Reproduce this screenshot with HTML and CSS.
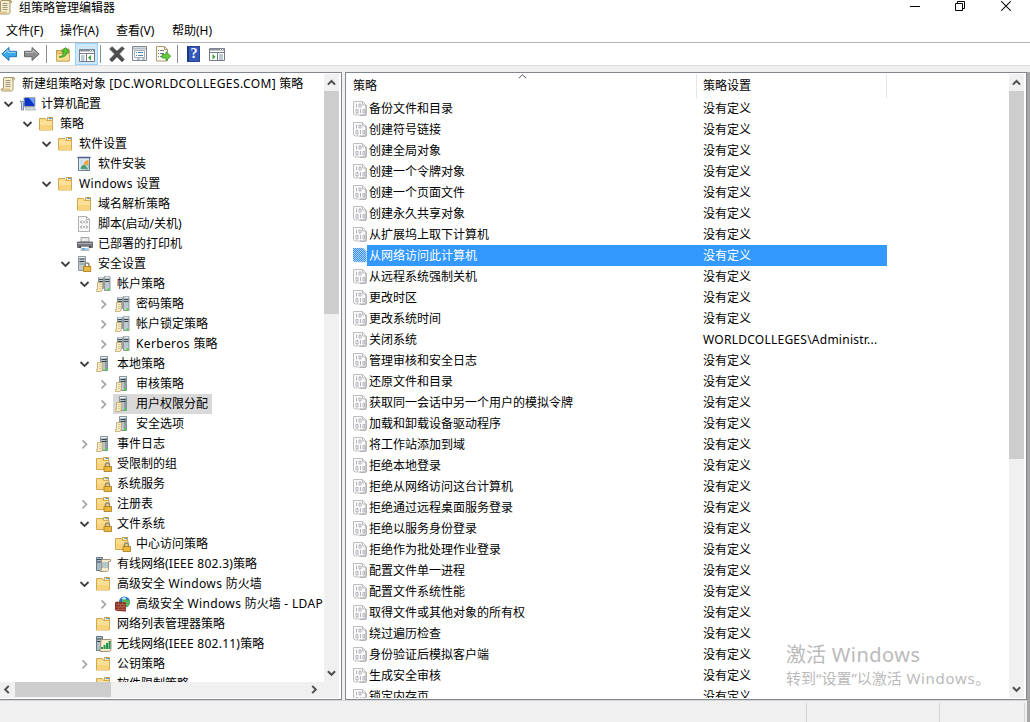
FILE: index.html
```html
<!DOCTYPE html>
<html lang="zh-CN">
<head>
<meta charset="utf-8">
<title>组策略管理编辑器</title>
<link rel="stylesheet" href="styles.css">
</head>
<body>
<svg class="defs" width="0" height="0">
  <symbol id="down" viewBox="0 0 17 20"><path d="M4.5 8l4 4 4-4" fill="none" stroke="#404040" stroke-width="1.8"/></symbol>
  <symbol id="right" viewBox="0 0 17 20"><path d="M6.5 6.3l4 4-4 4" fill="none" stroke="#a6a6a6" stroke-width="1.7"/></symbol>
  <symbol id="scroll" viewBox="0 0 16 16">
    <path d="M4 1.5h9.5c1 0 1.5 1 1 2l-1.5 1V13c0 1.500-1 2-2 2H2.500C1 15 .8 13 2 12.500h1.500V3z" fill="#f7efcf" stroke="#a8966a"/>
    <path d="M2 12.500h8v2.300H2z" fill="#d9c48c"/><path d="M12.500 4.500V2.500h2" fill="none" stroke="#b7a06a"/>
    <path d="M5.500 4.500h5M5.500 6.500h5M5.500 8.500h5M5.500 10.500h5" stroke="#9a957f"/>
  </symbol>
  <symbol id="computer" viewBox="0 0 16 16">
    <path d="M4 1.500h11v9H4z" fill="#0b35c4" stroke="#a9adb3"/><path d="M9 2h5.500v7z" fill="#6d9cf5"/>
    <path d="M5 11h9l1.500 3H6z" fill="#d9dde2" stroke="#8b929b" stroke-width=".6"/>
    <path d="M.5 4.500c0 2 1 2.500 1 2.500v7h2V7s1.300-.8 1-2.500L3.500 5.500h-2z" fill="#c4d6e8" stroke="#5c7a9b" stroke-width=".8"/>
  </symbol>
  <symbol id="folder" viewBox="0 0 16 16">
    <path d="M8.500 3.500V1.500h5v4h-5z" fill="#fbefc5" stroke="#c79f49"/><path d="M10 2.500h3" stroke="#4a9be0"/>
    <path d="M.5 2.500h6l1 2h6v9.500H.5z" fill="#fbdc8a" stroke="#d3a74c"/>
    <path d="M1 5h12v8.500H1z" fill="#fbe09a"/><path d="M1 9h12v4.500H1z" fill="#f8d37b"/>
  </symbol>
  <symbol id="lock" viewBox="0 0 16 16">
    <path d="M9.500 11V9.200c0-2.800 4-2.800 4 0V11" fill="none" stroke="#8f8a78" stroke-width="1.500"/>
    <path d="M8 10.500h7.500v5H8z" fill="#e3ad2d" stroke="#a87714" stroke-width=".8"/><path d="M8.500 12h6.500M8.500 14h6.500" stroke="#f5cf66" stroke-width=".7"/>
  </symbol>
  <symbol id="folderlock" viewBox="0 0 16 16">
    <path d="M7.500 3V1.500h5v4h-5z" fill="#fbefc5" stroke="#c79f49"/><path d="M9.500 2.500h2.500" stroke="#4a9be0"/>
    <path d="M.5 2.500h6l1 2h5.500v9H.5z" fill="#fbdc8a" stroke="#d3a74c"/><path d="M1 8h12v5H1z" fill="#f8d37b"/>
    <use href="#lock"/>
  </symbol>
  <symbol id="install" viewBox="0 0 16 16">
    <path d="M1.500 1.500h11v13h-11z" fill="#dfe7ef" stroke="#6b7d92"/><path d="M.5 1.500h13" stroke="#4c5a90" stroke-width="1.500"/>
    <path d="M6.500 9a5 5 0 015-5v5z" fill="#f2a33c"/><path d="M3 4h3.500v5H3z" fill="#c9dff0"/><path d="M3.500 13c.5-4 3-4.500 5-3.500l3 4z" fill="#4c9b72"/><path d="M9 9l3-1v5z" fill="#a8c7b6"/>
  </symbol>
  <symbol id="script" viewBox="0 0 16 16">
    <path d="M1.500.5h8l3 3v12h-11z" fill="#f8f8f8" stroke="#b0b0b0"/><path d="M9.500.5v3h3" fill="none" stroke="#b0b0b0"/>
    <path d="M5 4.500L3.500 6 5 7.500M9 4.500L10.500 6 9 7.500M6 6h2M5 9.500L3.500 11 5 12.500M9 9.500l1.500 1.500L9 12.500M6 11h2" fill="none" stroke="#7c7c86"/>
  </symbol>
  <symbol id="printer" viewBox="0 0 16 16">
    <path d="M4 1.500h8V6H4z" fill="#e9eaec" stroke="#8a8d92" stroke-width=".8"/><path d="M.5 6h15v5.500H.5z" fill="#75787e" stroke="#55585d" stroke-width=".8"/>
    <path d="M1 7.500h14" stroke="#aeb1b6"/><path d="M2.500 10h11v2h-11z" fill="#2e3034"/><path d="M4 10.500h8v4H4z" fill="#fff" stroke="#999" stroke-width=".7"/><path d="M5 12h3v2H5z" fill="#67aee2"/><path d="M8 12h3v2H8z" fill="#a7cfe9"/>
  </symbol>
  <symbol id="serverlock" viewBox="0 0 16 16">
    <path d="M1.500.5h7v14h-7z" fill="#c0cad1" stroke="#8a979f"/><path d="M2.500 3h5M2.500 5.500h5" stroke="#34414a"/><path d="M2.500 8h5" stroke="#84919a"/><path d="M2 1.500h6" stroke="#edf2f5"/>
    <g transform="translate(-1.500 0)"><use href="#lock"/></g>
  </symbol>
  <symbol id="doc" viewBox="0 0 16 16">
    <path d="M1.500 6.500h5v1.500l-.4 6c0 .9-.6 1.400-1.500 1.400H.6c-.8 0-.8-1.800.3-1.900h.5z" fill="#fbefc9" stroke="#c0a566" stroke-width=".9"/>
    <path d="M3 8.500h2.500M3 10.500h2.500M3 12.500h2" stroke="#c3b388" stroke-width=".7"/>
  </symbol>
  <symbol id="servers" viewBox="0 0 16 16">
    <path d="M2.500 1.500h5v11h-5zM8.500 .5h5.500v14H8.500z" fill="#bcc7ce" stroke="#84929a" stroke-width=".9"/>
    <path d="M3 2h4M9 1.200h4.500" stroke="#eef3f6"/><path d="M3 3.500h4M9 3.500h4.500M3 5.500h4M9 5.500h4.500" stroke="#3d4a52"/>
    <path d="M11.500 12.500h2v2h-2z" fill="#35e02f"/><use href="#doc"/>
  </symbol>
  <symbol id="server" viewBox="0 0 16 16">
    <path d="M4.500.5h7v14h-7z" fill="#b7c3ca" stroke="#84929a"/><path d="M9 1h2v13H9z" fill="#8e9ca5"/><path d="M5 1.500h6" stroke="#eef3f6"/>
    <path d="M5.500 3.500h5M5.500 5.500h5" stroke="#37444c"/><path d="M9 12.500h2v2H9z" fill="#35e02f"/><use href="#doc"/>
  </symbol>
  <symbol id="wired" viewBox="0 0 16 16">
    <path d="M.5 1.500h6v13h-6z" fill="#a9bac5" stroke="#647887"/><path d="M1 3.500h5M1 6h5" stroke="#34495a"/>
    <path d="M6 3.500h8.500v2h-2v8c0 1-1 2-2 2H4l1.500-2V5z" fill="#f6ecc9" stroke="#9f9778"/><path d="M7 6v6M9 6v6M11 6v6" stroke="#71a1ca"/>
  </symbol>
  <symbol id="wireless" viewBox="0 0 16 16">
    <path d="M.5.5h6v14h-6z" fill="#b3c0c8" stroke="#647887"/><path d="M1 3h5M1 5.500h5" stroke="#34495a"/>
    <path d="M5 3.500h10v10c0 1.200-1 2-2 2H4z" fill="#f6ecc9" stroke="#9f9778"/><path d="M5 13v-2h2v2zM7.500 13V9h2v4zM10 13V7h2v6zM12.500 13V5h2v8z" fill="#239454"/>
  </symbol>
  <symbol id="firewall" viewBox="0 0 16 16">
    <circle cx="9.500" cy="6" r="5.500" fill="#2778c4"/><path d="M7 3c2-2 4-1 4 0s2 2 4 1c1 4-2 6-3 7-2-2-5-3-5-8z" fill="#58b65b"/><path d="M6.500 2.500l2-1.500 3 1-2 2z" fill="#bce4f7"/>
    <path d="M0 6.500l2-1 9 1v9l-9-.5-2-1z" fill="#8c3427"/><path d="M1 8.500h10M1 11h10M1 13.500h10M3.500 6v2.500M7.500 6.500v2M5.500 8.500V11M9 8.500V11M3.500 11v2.500M7.500 11v2.500" stroke="#c27a68" stroke-width=".6"/>
  </symbol>
  <symbol id="bits" viewBox="0 0 14 15">
    <path d="M.5.500h9l3.500 3.500v9.500l-1 .8-1.500-.8-1.500 1-1.500-1-1.500 1-1.500-1-1.500.8L.5 13z" fill="#fafafb" stroke="#bdbdc0"/>
    <path d="M9.500.5V4h3.500" fill="none" stroke="#bdbdc0"/><path d="M13.200 4v10M7 14.300h6" stroke="#9a9a9c" stroke-width=".8"/>
    <path d="M3.500 2.500v4M6 3h2v3H6zM3 8.500h2v3.500H3zM7.500 8v4M10 8.500h1.700v3.500H10z" fill="none" stroke="#acacba" stroke-width=".9"/>
  </symbol>
  <pattern id="dither" width="2" height="2" patternUnits="userSpaceOnUse"><path d="M0 0h1v1H0zM1 1h1v1H1z" fill="#2f92f8" shape-rendering="crispEdges"/></pattern>
  <symbol id="bitssel" viewBox="0 0 14 15">
    <path d="M0 0h10l3.500 3.500V13.500l-1.500 1-1.500-1-1.500 1-1.500-1-1.500 1-1.500-1-1.500.8L0 13z" fill="#b4cfee"/>
    <path d="M0 0h10l3.500 3.500V13.500l-1.500 1-1.500-1-1.500 1-1.500-1-1.500 1-1.500-1-1.500.8L0 13z" fill="url(#dither)"/>
  </symbol>
  <symbol id="arrup" viewBox="0 0 15 17"><path d="M3.900 10.600l3.600-3.600 3.600 3.600" fill="none" stroke="#505050" stroke-width="2"/></symbol>
  <symbol id="arrdown" viewBox="0 0 15 17"><path d="M3.900 6.200l3.600 3.600 3.600-3.600" fill="none" stroke="#505050" stroke-width="2"/></symbol>
</svg>

<div class="window">
  <header class="titlebar">
    <svg class="app-icon" width="16" height="16"><use href="#scroll"/></svg>
    <span class="title">组策略管理编辑器</span>
    <span class="controls">
      <svg width="10" height="12"><path d="M0 6.500h10" stroke="#000"/></svg>
      <svg width="11" height="12"><path d="M.5 3.500h7v7h-7zM2.500 3V1.500h7v7H8" fill="none" stroke="#000"/></svg>
      <svg width="10" height="12"><path d="M.3 1.300l9.400 9.400M9.700 1.300L.3 10.700" stroke="#000" stroke-width="1.100"/></svg>
    </span>
  </header>
  <nav class="menubar"><span class="m1">文件(F)</span><span>操作(A)</span><span>查看(V)</span><span>帮助(H)</span></nav>
  <div class="toolbar">
    <svg class="t-back" width="16" height="16"><path d="M.8 8L8 1.500v3.800h7.500v5.400H8v3.800z" fill="#36a9e6" stroke="#2373b4"/><path d="M3 7.500l4-3.600v2.500h7.500" fill="none" stroke="#a4e0fa"/></svg>
    <svg class="t-fwd" width="16" height="16"><path d="M15.200 8L8 1.500v3.800H.5v5.400H8v3.800z" fill="#8e8e8e" stroke="#666"/><path d="M1.500 6.400H9V4l3.800 3.500" fill="none" stroke="#c2c2c2"/></svg>
    <i class="sep s1"></i>
    <svg class="t-up" width="16" height="16"><path d="M1.500 4.500h5l1-1.500h6.500v12H1.500z" fill="#f1cf76" stroke="#bb9342"/><path d="M1.500 7.500h13V15H1.500z" fill="#f7dc91" stroke="#c69e4b" stroke-width=".7"/><path d="M4 11c3-.5 4.500-2 4.700-5H6.500l4-4.500 4 4.500h-2.300C11.500 9.500 9 11.800 4 11z" fill="#54c632" stroke="#318c22" stroke-width=".8"/></svg>
    <span class="active"><svg width="16" height="16"><path d="M.5 2.500h15v12H.5z" fill="#fff" stroke="#747b85"/><path d="M1 3.500h14" stroke="#8a919b" stroke-width="2"/><path d="M0 6.500h16M7.500 7v8" stroke="#747b85"/><path d="M11 3.500h1M13 3.500h1" stroke="#fff"/><path d="M2 9h3.500M2 11h3.500M2 13h3.500" stroke="#7690aa"/><path d="M12 8v5.500L9 10.800z" fill="#37a52d"/></svg></span>
    <i class="sep s2"></i>
    <svg class="t-del" width="16" height="16"><path d="M.5 3l2.500-2.500 5 4.500L13 .5l2.500 2-5 5.500 5 5.500-2.500 2.500-5-5-5 5L.5 13.500 5.500 8z" fill="#4e4e4e" stroke="#777" stroke-width=".6"/></svg>
    <svg class="t-prop" width="16" height="16"><path d="M.5.5h14v14H.5z" fill="#f6f8fa" stroke="#7f8993"/><path d="M1 2.500h13" stroke="#b5bdc6" stroke-width="2"/><path d="M2.500 4.500h10v7h-10z" fill="#fff" stroke="#a6aeb7"/><path d="M4 6.500h1M6 6.500h5M4 9.500h1M6 9.500h5" stroke="#4f83b9"/><path d="M5 13h3M10 13h3" stroke="#7b8b99"/></svg>
    <svg class="t-exp" width="16" height="16"><path d="M1.500.5h8l3 3v11.500h-11z" fill="#fcfaf0" stroke="#aa9c70"/><path d="M9.500.5v3h3" fill="none" stroke="#aa9c70"/><path d="M3 4.500h1M3 7.500h1M3 10.500h1M5 4.500h4M5 7.500h4M5 10.500h3" stroke="#687c94"/><path d="M7 8.500h4V5.800l4.800 4.400-4.800 4.500v-2.700H7z" fill="#64cd3c" stroke="#379524" stroke-width=".8"/></svg>
    <i class="sep s3"></i>
    <span class="help">?</span>
    <svg class="t-pane" width="16" height="16"><path d="M.5 2.500h15v12H.5z" fill="#fff" stroke="#747b85"/><path d="M1 3.500h14" stroke="#8a919b" stroke-width="2"/><path d="M0 6.500h16M8.500 7v8" stroke="#747b85"/><path d="M11 3.500h1M13 3.500h1" stroke="#fff"/><path d="M10 9h4M10 11h4M10 13h4" stroke="#7690aa"/><path d="M3.500 8v5.500l3-2.700z" fill="#37a52d"/></svg>
  </div>

  <main class="panes">
    <section class="tree-pane">
      <div class="tree-main">
        <div class="tree">
          <div class="row root"><svg class="ic"><use href="#scroll"/></svg><span class="label">新建组策略对象 <span class="dom">[DC.WORLDCOLLEGES.COM]</span> 策略</span></div>
          <div class="row"><svg class="ch"><use href="#down"/></svg><span class="item"><svg class="ic"><use href="#computer"/></svg>计算机配置</span></div>
          <div class="row l2"><svg class="ch"><use href="#down"/></svg><span class="item"><svg class="ic"><use href="#folder"/></svg>策略</span></div>
          <div class="row l3"><svg class="ch"><use href="#down"/></svg><span class="item"><svg class="ic"><use href="#folder"/></svg>软件设置</span></div>
          <div class="row l4"><svg class="ch"></svg><span class="item"><svg class="ic"><use href="#install"/></svg>软件安装</span></div>
          <div class="row l3"><svg class="ch"><use href="#down"/></svg><span class="item"><svg class="ic"><use href="#folder"/></svg><span><span class="lat">Windows </span>设置</span></span></div>
          <div class="row l4"><svg class="ch"></svg><span class="item"><svg class="ic"><use href="#folder"/></svg>域名解析策略</span></div>
          <div class="row l4"><svg class="ch"></svg><span class="item"><svg class="ic"><use href="#script"/></svg>脚本(启动/关机)</span></div>
          <div class="row l4"><svg class="ch"></svg><span class="item"><svg class="ic"><use href="#printer"/></svg>已部署的打印机</span></div>
          <div class="row l4"><svg class="ch"><use href="#down"/></svg><span class="item"><svg class="ic"><use href="#serverlock"/></svg>安全设置</span></div>
          <div class="row l5"><svg class="ch"><use href="#down"/></svg><span class="item"><svg class="ic"><use href="#servers"/></svg>帐户策略</span></div>
          <div class="row l6"><svg class="ch"><use href="#right"/></svg><span class="item"><svg class="ic"><use href="#servers"/></svg>密码策略</span></div>
          <div class="row l6"><svg class="ch"><use href="#right"/></svg><span class="item"><svg class="ic"><use href="#servers"/></svg>帐户锁定策略</span></div>
          <div class="row l6"><svg class="ch"><use href="#right"/></svg><span class="item"><svg class="ic"><use href="#servers"/></svg><span><span class="lat">Kerberos </span>策略</span></span></div>
          <div class="row l5"><svg class="ch"><use href="#down"/></svg><span class="item"><svg class="ic"><use href="#server"/></svg>本地策略</span></div>
          <div class="row l6"><svg class="ch"><use href="#right"/></svg><span class="item"><svg class="ic"><use href="#server"/></svg>审核策略</span></div>
          <div class="row l6"><svg class="ch"><use href="#right"/></svg><span class="item current"><svg class="ic"><use href="#server"/></svg>用户权限分配</span></div>
          <div class="row l6"><svg class="ch"></svg><span class="item"><svg class="ic"><use href="#server"/></svg>安全选项</span></div>
          <div class="row l5"><svg class="ch"><use href="#right"/></svg><span class="item"><svg class="ic"><use href="#server"/></svg>事件日志</span></div>
          <div class="row l5"><svg class="ch"></svg><span class="item"><svg class="ic"><use href="#folderlock"/></svg>受限制的组</span></div>
          <div class="row l5"><svg class="ch"></svg><span class="item"><svg class="ic"><use href="#folderlock"/></svg>系统服务</span></div>
          <div class="row l5"><svg class="ch"><use href="#right"/></svg><span class="item"><svg class="ic"><use href="#folderlock"/></svg>注册表</span></div>
          <div class="row l5"><svg class="ch"><use href="#down"/></svg><span class="item"><svg class="ic"><use href="#folderlock"/></svg>文件系统</span></div>
          <div class="row l6"><svg class="ch"></svg><span class="item"><svg class="ic"><use href="#folderlock"/></svg>中心访问策略</span></div>
          <div class="row l5"><svg class="ch"></svg><span class="item"><svg class="ic"><use href="#wired"/></svg><span>有线网络<span class="ieee">(IEEE 802.3)</span>策略</span></span></div>
          <div class="row l5"><svg class="ch"><use href="#down"/></svg><span class="item"><svg class="ic"><use href="#folder"/></svg><span>高级安全<span class="lat"> Windows </span>防火墙</span></span></div>
          <div class="row l6"><svg class="ch"><use href="#right"/></svg><span class="item"><svg class="ic"><use href="#firewall"/></svg><span>高级安全<span class="lat"> Windows </span>防火墙<span class="lat"> - LDAP</span></span></span></div>
          <div class="row l5"><svg class="ch"></svg><span class="item"><svg class="ic"><use href="#folder"/></svg>网络列表管理器策略</span></div>
          <div class="row l5"><svg class="ch"></svg><span class="item"><svg class="ic"><use href="#wireless"/></svg><span>无线网络<span class="ieee">(IEEE 802.11)</span>策略</span></span></div>
          <div class="row l5"><svg class="ch"><use href="#right"/></svg><span class="item"><svg class="ic"><use href="#folder"/></svg>公钥策略</span></div>
          <div class="row l5"><svg class="ch"></svg><span class="item"><svg class="ic"><use href="#folder"/></svg>软件限制策略</span></div>
        </div>
        <div class="vbar"><svg width="15" height="17"><use href="#arrup"/></svg><i class="thumb tree-thumb"></i><svg class="end" width="15" height="17"><use href="#arrdown"/></svg></div>
      </div>
      <div class="hbar"><svg width="15" height="15"><path d="M8.800 3.900L5.200 7.500l3.600 3.600" fill="none" stroke="#505050" stroke-width="2"/></svg><i class="hthumb"></i><svg class="hend" width="17" height="15"><path d="M6.200 3.900l3.600 3.600-3.600 3.600" fill="none" stroke="#505050" stroke-width="2"/></svg></div>
    </section>

    <section class="list-pane">
      <div class="list">
        <div class="head"><span class="c1">策略<svg class="sort" width="9" height="5"><path d="M.8 4.300L4.500 .8l3.700 3.500" fill="none" stroke="#555"/></svg></span><span class="c2">策略设置</span></div>
        <div class="entry"><svg class="bi"><use href="#bits"/></svg><span class="name">备份文件和目录</span><span class="val">没有定义</span></div>
        <div class="entry"><svg class="bi"><use href="#bits"/></svg><span class="name">创建符号链接</span><span class="val">没有定义</span></div>
        <div class="entry"><svg class="bi"><use href="#bits"/></svg><span class="name">创建全局对象</span><span class="val">没有定义</span></div>
        <div class="entry"><svg class="bi"><use href="#bits"/></svg><span class="name">创建一个令牌对象</span><span class="val">没有定义</span></div>
        <div class="entry"><svg class="bi"><use href="#bits"/></svg><span class="name">创建一个页面文件</span><span class="val">没有定义</span></div>
        <div class="entry"><svg class="bi"><use href="#bits"/></svg><span class="name">创建永久共享对象</span><span class="val">没有定义</span></div>
        <div class="entry"><svg class="bi"><use href="#bits"/></svg><span class="name">从扩展坞上取下计算机</span><span class="val">没有定义</span></div>
        <div class="entry selected"><svg class="bi"><use href="#bitssel"/></svg><span class="name">从网络访问此计算机</span><span class="val">没有定义</span></div>
        <div class="entry"><svg class="bi"><use href="#bits"/></svg><span class="name">从远程系统强制关机</span><span class="val">没有定义</span></div>
        <div class="entry"><svg class="bi"><use href="#bits"/></svg><span class="name">更改时区</span><span class="val">没有定义</span></div>
        <div class="entry"><svg class="bi"><use href="#bits"/></svg><span class="name">更改系统时间</span><span class="val">没有定义</span></div>
        <div class="entry"><svg class="bi"><use href="#bits"/></svg><span class="name">关闭系统</span><span class="val admin">WORLDCOLLEGES\Administr...</span></div>
        <div class="entry"><svg class="bi"><use href="#bits"/></svg><span class="name">管理审核和安全日志</span><span class="val">没有定义</span></div>
        <div class="entry"><svg class="bi"><use href="#bits"/></svg><span class="name">还原文件和目录</span><span class="val">没有定义</span></div>
        <div class="entry"><svg class="bi"><use href="#bits"/></svg><span class="name">获取同一会话中另一个用户的模拟令牌</span><span class="val">没有定义</span></div>
        <div class="entry"><svg class="bi"><use href="#bits"/></svg><span class="name">加载和卸载设备驱动程序</span><span class="val">没有定义</span></div>
        <div class="entry"><svg class="bi"><use href="#bits"/></svg><span class="name">将工作站添加到域</span><span class="val">没有定义</span></div>
        <div class="entry"><svg class="bi"><use href="#bits"/></svg><span class="name">拒绝本地登录</span><span class="val">没有定义</span></div>
        <div class="entry"><svg class="bi"><use href="#bits"/></svg><span class="name">拒绝从网络访问这台计算机</span><span class="val">没有定义</span></div>
        <div class="entry"><svg class="bi"><use href="#bits"/></svg><span class="name">拒绝通过远程桌面服务登录</span><span class="val">没有定义</span></div>
        <div class="entry"><svg class="bi"><use href="#bits"/></svg><span class="name">拒绝以服务身份登录</span><span class="val">没有定义</span></div>
        <div class="entry"><svg class="bi"><use href="#bits"/></svg><span class="name">拒绝作为批处理作业登录</span><span class="val">没有定义</span></div>
        <div class="entry"><svg class="bi"><use href="#bits"/></svg><span class="name">配置文件单一进程</span><span class="val">没有定义</span></div>
        <div class="entry"><svg class="bi"><use href="#bits"/></svg><span class="name">配置文件系统性能</span><span class="val">没有定义</span></div>
        <div class="entry"><svg class="bi"><use href="#bits"/></svg><span class="name">取得文件或其他对象的所有权</span><span class="val">没有定义</span></div>
        <div class="entry"><svg class="bi"><use href="#bits"/></svg><span class="name">绕过遍历检查</span><span class="val">没有定义</span></div>
        <div class="entry"><svg class="bi"><use href="#bits"/></svg><span class="name">身份验证后模拟客户端</span><span class="val">没有定义</span></div>
        <div class="entry"><svg class="bi"><use href="#bits"/></svg><span class="name">生成安全审核</span><span class="val">没有定义</span></div>
        <div class="entry"><svg class="bi"><use href="#bits"/></svg><span class="name">锁定内存页</span><span class="val">没有定义</span></div>
      </div>
      <div class="vbar"><svg width="15" height="17"><use href="#arrup"/></svg><i class="thumb list-thumb"></i><svg class="end" width="15" height="17"><use href="#arrdown"/></svg></div>
    </section>
  </main>
  <footer class="status"><i class="p1"></i><i class="p2"></i><i class="p3"></i></footer>
  <div class="edge"></div>
  <div class="watermark"><div class="w1">激活<span class="wl"> Windows</span></div><div class="w2">转到“设置”以激活<span class="wl2"> Windows</span>。</div></div>
</div>
</body>
</html>
```
FILE: styles.css
```css
* { box-sizing: border-box; }
body { margin: 0; background: #f0f0f0; color: #000; font: 12px/20px "Noto Sans", "Noto Sans CJK SC", sans-serif; }
svg { display: block; flex: none; }
i { display: block; flex: none; }
.defs { position: absolute; }
.window { position: relative; width: 1030px; height: 722px; overflow: hidden; display: flex; flex-direction: column; }

.titlebar { height: 20px; flex: none; background: #fff; display: flex; align-items: flex-start; }
.app-icon { margin: -1px 0 0 -3px; }
.title { margin-left: 6px; line-height: 16px; }
.controls { display: flex; gap: 35px; margin-left: auto; padding-right: 19px; }
.menubar { height: 22px; flex: none; background: #fff; display: flex; padding-left: 6px; line-height: 22px; }
.menubar span { width: 56px; white-space: nowrap; }
.menubar .m1 { width: 54px; }

.toolbar { height: 24px; flex: none; background: #fff; border-top: 1px solid #b4b4b4; border-bottom: 1px solid #dcdcdc; display: flex; align-items: center; padding-left: 1px; }
.t-fwd { margin-left: 7px; }
.sep { width: 1px; height: 18px; background: #8c8c8c; }
.s1 { margin-left: 6px; }
.t-up { margin-left: 8px; }
.active { margin-left: 4px; width: 23px; height: 22px; background: #cce8ff; border: 1px solid #99d1ff; padding: 3px; }
.s2 { margin-left: 2px; }
.t-del { margin-left: 8px; }
.t-prop { margin-left: 7px; }
.t-exp { margin-left: 7px; }
.s3 { margin-left: 6px; }
.help { margin-left: 9px; width: 13px; height: 16px; background: #3558bd; border: 1px solid #27468f; border-left: 2px solid #1d3879; color: #fff; font: bold 14px/14px "Liberation Serif", serif; text-align: center; }
.t-pane { margin-left: 9px; }

.panes { height: 628px; margin-top: 6px; flex: none; display: flex; gap: 3px; }
.tree-pane { width: 342px; border-top: 1px solid #828790; border-right: 1px solid #828790; border-bottom: 1px solid #828790; background: #fff; display: flex; flex-direction: column; padding: 1px 2px 1px 0; }
.tree-main { display: flex; height: 608px; overflow: hidden; }
.tree { flex: 1; min-width: 0; overflow: hidden; }
.row { height: 20px; display: flex; align-items: center; white-space: nowrap; }
.root { gap: 6px; }
.dom { letter-spacing: .42px; }
.lat { letter-spacing: .36px; white-space: pre; }
.ieee { letter-spacing: .25px; }
.l2 { padding-left: 19px; }
.l3 { padding-left: 38px; }
.l4 { padding-left: 57px; }
.l5 { padding-left: 76px; }
.l6 { padding-left: 95px; }
.ch { width: 17px; height: 20px; }
.ic { width: 16px; height: 16px; }
.item { display: flex; align-items: center; gap: 5px; height: 20px; margin-left: 1px; padding: 0 4px 0 2px; }
.current { background: #d9d9d9; }
.vbar { width: 15px; flex: none; background: #f0f0f0; display: flex; flex-direction: column; }
.thumb { width: 15px; background: #cdcdcd; }
.tree-thumb { height: 223px; }
.list-thumb { height: 368px; }
.end { margin-top: auto; }
.hbar { height: 16px; background: #f0f0f0; display: flex; }
.hthumb { width: 96px; height: 15px; background: #cdcdcd; }
.hend { margin-left: auto; margin-right: 16px; }

.list-pane { width: 682px; border: 1px solid #828790; background: #fff; display: flex; padding: 1px 2px 1px 0; }
.list { flex: 1; overflow: hidden; }
.head { height: 24px; display: flex; line-height: 23px; }
.c1 { position: relative; width: 351px; height: 24px; padding-left: 7px; border-right: 1px solid #e5e5e5; }
.sort { position: absolute; left: 172px; top: 0; }
.c2 { width: 190px; height: 24px; padding-left: 6px; border-right: 1px solid #e5e5e5; }
.entry { height: 21px; display: flex; align-items: center; width: 541px; padding-left: 7px; line-height: 21px; white-space: nowrap; }
.bi { width: 14px; height: 15px; }
.name { width: 334px; padding-left: 2px; }
.val { width: 186px; padding-left: 2px; }
.admin { letter-spacing: .25px; }
.selected .name, .selected .val { background: #3399ff; color: #fff; }

.status { height: 22px; flex: none; display: flex; padding-top: 2px; border-top: 1px solid #d7d7d7; }
.status i { width: 1px; height: 19px; background: #d5d5d5; }
.p1 { margin-left: 806px; }
.p2 { margin-left: 132px; }
.p3 { margin-left: 84px; }
.edge { position: absolute; left: 1027px; top: 72px; width: 3px; height: 650px; background: #a6a6a6; }
.watermark { position: absolute; left: 786px; top: 641px; color: #bababa; white-space: nowrap; }
.w1 { font-size: 20px; line-height: 27px; }
.w2 { font-size: 15px; line-height: 20px; }
.wl { letter-spacing: .5px; }
.wl2 { letter-spacing: .7px; }
```
